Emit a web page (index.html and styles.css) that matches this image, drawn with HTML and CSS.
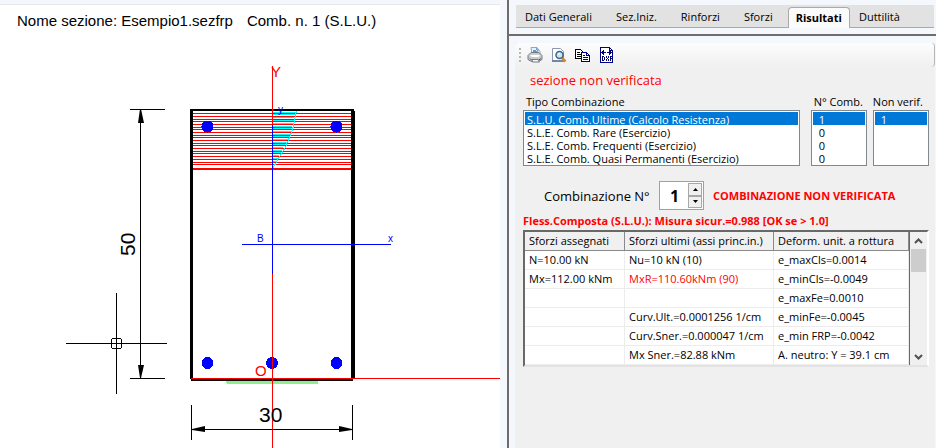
FILE: index.html
```
<!DOCTYPE html>
<html lang="it">
<head>
<meta charset="utf-8">
<title>Verifica sezione</title>
<link rel="stylesheet" href="styles.css">
</head>
<body>
<main class="app">
  <section class="view">
    <h1 class="view-title"><span>Nome sezione: Esempio1.sezfrp</span><span>Comb. n. 1 (S.L.U.)</span></h1>
    <svg class="drawing" viewBox="0 40 500 408" preserveAspectRatio="xMinYMin meet" role="img" aria-label="Sezione 30 x 50">
      <g shape-rendering="crispEdges">
        <path fill="#90ee90" d="M226 380h92v3l-1 1h-90l-1-1z"/>
        <path fill="#000" d="M190 109h164v2h1v268h-2v2H191v-2h-1zM193 111v268h158V111z" fill-rule="evenodd"/>
        <path stroke="#f00" d="M193 113.5h158M193 116.5h158M193 119.5h158M193 121.5h158M193 124.5h158M193 127.5h158M193 129.5h158M193 132.5h158M193 135.5h158M193 137.5h158M193 140.5h158M193 143.5h158M193 145.5h158M193 148.5h158M193 151.5h158M193 153.5h158M193 156.5h158M193 159.5h158M193 162.5h158M193 164.5h158"/>
        <path fill="#f00" d="M193 168h158v2H193z"/>
        <path stroke="#0ff" fill="none" d="M273 112.5h23M273 114.5h22M273 117.5h21M273 120.5h21M273 123.5h20M273 126.5h19M273 128.5h18M273 131.5h18M273 134.5h17M273 136.5h16M273 139.5h15M273 142.5h14M273 144.5h12M273 147.5h10M273 150.5h9M273 152.5h8M273 155.5h6M273 158.5h5M273 161.5h3M296.5 111L292.5 130L285.500 147L277.500 160L273 168"/>
      </g>
      <g fill="#00f" shape-rendering="crispEdges">
        <circle cx="207.5" cy="126.5" r="6"/><circle cx="336.5" cy="126.5" r="6"/>
        <circle cx="207.5" cy="363" r="6"/><circle cx="272" cy="363" r="6"/><circle cx="336.5" cy="363" r="6"/>
      </g>
      <g fill="none" shape-rendering="crispEdges">
        <path stroke="#f00" d="M272.5 66v382M191 378.5h309"/>
        <path stroke="#00f" d="M272.5 125v149M242 244.5h149"/>
        <path stroke="#000" d="M140.5 109v269M130 109.5h35M130 378.5h35M191.5 405v35M352.5 405v35M191 429.5h161M66 343.5h101M116.5 293v101"/>
        <path stroke="#000" d="M112.5 338.5h8l1 1v8l-1 1h-8l-1-1v-8z"/>
      </g>
      <path d="M140 109h1l3 14h-6zM138 365h6l-3 13h-1zM192 429l13-3v6l-13-2zM352 429l-13-3v6l13-2z"/>
      <g class="dim"><text x="259" y="422">30</text><text transform="translate(135 256) rotate(-90)">50</text></g>
      <g class="axis"><text x="271" y="77">Y</text><text x="255" y="376">O</text></g>
      <g class="local"><text x="257" y="242">B</text><text x="388" y="242">x</text><text x="278" y="113">y</text></g>
    </svg>
  </section>
  <aside class="side">
    <nav class="tabs-bar">
      <div class="tabs" role="tablist">
        <button type="button" role="tab">Dati Generali</button>
        <button type="button" role="tab">Sez.Iniz.</button>
        <button type="button" role="tab">Rinforzi</button>
        <button type="button" role="tab">Sforzi</button>
        <button type="button" role="tab" class="active" aria-selected="true">Risultati</button>
        <button type="button" role="tab">Duttilità</button>
      </div>
    </nav>
    <div class="panel">
      <div class="toolbar">
        <span class="grip"></span>
        <button type="button" aria-label="Stampa"><svg viewBox="0 0 16 16">
          <path fill="#e9f3fd" stroke="#8ba6c4" d="M5 6.500L4 .5h6l3 4v3z"/><path fill="#5b9ad8" d="M6 3h4l1 2H6zM9 .5v3.500h3z"/>
          <path fill="#c9cbcd" stroke="#75797e" d="M1 8.500l3-3h8l3 3v4l-3.500 2h-7L1 12.500z"/><path fill="#fff" d="M3 8h10l-1.500 2h-7z"/><path stroke="#55595e" d="M3 11.500l2 2h6l3-2"/><path fill="#f8f8f8" stroke="#75797e" d="M5 12.500h6l1.500 2.500h-7z"/></svg></button>
        <button type="button" aria-label="Anteprima"><svg viewBox="0 0 16 16">
          <path fill="#fff" stroke="#8698b4" d="M1.500 1.500h8l3 3v10h-11z"/><path fill="#6f86a8" d="M1 13h12v2H1z"/>
          <path stroke="#d98928" stroke-width="2.500" d="M11 11l3.500 3.500"/><circle cx="8.500" cy="8" r="3.500" fill="#c5e7f8" stroke="#46617f" stroke-width="1.500"/><path stroke="#fff" d="M7 7.500l2-1.500"/></svg></button>
        <button type="button" aria-label="Copia"><svg viewBox="0 0 16 16" shape-rendering="crispEdges">
          <path fill="#fff" stroke="#000" d="M.5 2.500h5l3 3v6h-8z"/><path stroke="#000" d="M2 5.500h3M2 7.500h5M2 9.500h5"/>
          <path fill="#fff" stroke="#000080" d="M6.500 5.500h5l3 3v6h-8zM11.500 5.500v3h3"/><path stroke="#000080" d="M8 8.500h2M8 10.500h5M8 12.500h5"/></svg></button>
        <button type="button" aria-label="Esporta DXF"><svg viewBox="0 0 16 16" shape-rendering="crispEdges">
          <path fill="#fff" stroke="#000080" d="M1.500 .5h9l3 3v12h-12z"/><path stroke="#000080" d="M10.500 .5v3h3M2 5.500h5M3.500 4v3M4.500 3v5M8 5.500h5M10.500 3v5M11.500 4v3"/>
          <path stroke="#000080" d="M3.500 9v5M3 9.500h2M3 13.500h2M5.500 10v3M7.500 9v2M9.500 9v2M8.500 11v1M7.500 12v2M9.500 12v2M11.500 9v5M11 9.500h2M11 11.500h2"/></svg></button>
      </div>
      <div class="content">
        <p class="status">sezione non verificata</p>
        <div class="lists">
          <div class="field wide"><label for="tipo">Tipo Combinazione</label>
            <select id="tipo" size="4"><option selected>S.L.U. Comb.Ultime (Calcolo Resistenza)</option><option>S.L.E. Comb. Rare (Esercizio)</option><option>S.L.E. Comb. Frequenti (Esercizio)</option><option>S.L.E. Comb. Quasi Permanenti (Esercizio)</option></select></div>
          <div class="field count"><label for="ncomb">N° Comb.</label>
            <select id="ncomb" size="4"><option selected>1</option><option>0</option><option>0</option><option>0</option></select></div>
          <div class="field count"><label for="nonver">Non verif.</label>
            <select id="nonver" size="4"><option selected>1</option></select></div>
        </div>
        <div class="picker">
          <label for="num">Combinazione N°</label>
          <div class="spinner"><input id="num" type="text" value="1">
            <div class="steps"><button type="button" aria-label="Aumenta"><svg viewBox="0 0 5 3"><path d="M0 3h5L2.500 0z"/></svg></button><button type="button" aria-label="Diminuisci"><svg viewBox="0 0 5 3"><path d="M0 0h5L2.500 3z"/></svg></button></div></div>
          <strong>COMBINAZIONE NON VERIFICATA</strong>
        </div>
        <p class="summary">Fless.Composta (S.L.U.): Misura sicur.=0.988 [OK se &gt; 1.0]</p>
        <div class="grid">
          <table>
            <thead><tr><th class="c1">Sforzi assegnati</th><th class="c2">Sforzi ultimi (assi princ.in.)</th><th>Deform. unit. a rottura</th></tr></thead>
            <tbody>
              <tr><td>N=10.00 kN</td><td>Nu=10 kN (10)</td><td>e_maxCls=0.0014</td></tr>
              <tr><td>Mx=112.00 kNm</td><td class="bad">MxR=110.60kNm (90)</td><td>e_minCls=-0.0049</td></tr>
              <tr><td></td><td></td><td>e_maxFe=0.0010</td></tr>
              <tr><td></td><td>Curv.Ult.=0.0001256 1/cm</td><td>e_minFe=-0.0045</td></tr>
              <tr><td></td><td>Curv.Sner.=0.000047 1/cm</td><td>e_min FRP=-0.0042</td></tr>
              <tr><td></td><td>Mx Sner.=82.88 kNm</td><td>A. neutro: Y = 39.1 cm</td></tr>
            </tbody>
          </table>
          <div class="scroll">
            <button type="button" aria-label="Su"><svg viewBox="0 0 9 6"><path d="M1 5l3.500-3.500L8 5"/></svg></button>
            <span class="thumb"></span>
            <button type="button" aria-label="Giù"><svg viewBox="0 0 9 6"><path d="M1 1l3.500 3.500L8 1"/></svg></button>
          </div>
        </div>
      </div>
    </div>
  </aside>
</main>
</body>
</html>
```
FILE: styles.css
```
* { box-sizing: border-box; }
body {
  margin: 0;
  background: #f4f7fc;
  color: #000;
  font: 12px/16px "Open Sans", "Noto Sans", sans-serif;
}
button, input, select { font: inherit; color: inherit; margin: 0; padding: 0; border: 0; background: none; }
p, h1 { margin: 0; }
svg { display: block; fill: none; }

.app { display: flex; min-height: 100vh; }

.view {
  flex: 500 1 500px;
  min-width: 0;
  margin: 4px 7px 0 0;
  border-top: 1px solid #e6e8ec;
  background: #fff;
}
.view-title {
  display: flex;
  gap: 14px;
  height: 35px;
  padding: 7px 17px;
  font: 15px/18px "Liberation Sans", sans-serif;
  white-space: nowrap;
}
.drawing { width: 100%; fill: #000; }
.drawing text { font-family: "Liberation Sans", sans-serif; }
.dim { font-size: 21px; }
.axis { font-size: 15px; fill: #f00; }
.local { font-size: 10px; fill: #00f; }

.side {
  flex: 429 1 429px;
  display: flex;
  flex-direction: column;
  min-width: 0;
  border-left: 2px solid #6d6d6d;
}
.tabs-bar { padding: 5px 2px 6px 7px; border-bottom: 2px solid #6d6d6d; }
.tabs {
  display: flex;
  align-items: flex-end;
  gap: 6px;
  height: 23px;
  border-bottom: 1px solid #a9a9a9;
  background: #e2e2e2;
}
.tabs button { height: 20px; padding: 0 9px; font-size: 11px; line-height: 18px; white-space: nowrap; }
.tabs .active {
  height: 21px;
  margin: 0 -6px -1px 0;
  padding: 0 7px;
  border: 1px solid #a9a9a9;
  border-bottom: 0;
  border-radius: 4px 4px 0 0;
  background: #fbfbfb;
  font-weight: 700;
}

.panel { flex: 1; margin: 7px 1px 0 6px; background: #f0f0f0; }
.toolbar {
  display: flex;
  align-items: center;
  gap: 8px;
  height: 24px;
  padding-left: 4px;
  border-right: 1px solid #b5b5b5;
  border-radius: 4px;
  background: linear-gradient(#fdfdfd, #f0f0f0);
}
.toolbar svg { width: 16px; height: 16px; }
.grip { width: 2px; height: 15px; margin-right: -2px; background: repeating-linear-gradient(#b5b5b5 0 2px, transparent 2px 4px); }

.content { padding: 4px 6px 0 8px; }
.status { padding-left: 7px; color: #f00; font-size: 13px; line-height: 18px; }
.lists { display: flex; padding-top: 4px; }
.field { display: flex; flex-direction: column; }
.field label { padding-left: 3px; line-height: 17px; font-size: 11px; white-space: nowrap; }
.wide { flex: 276; margin-right: 11px; }
.count { flex: 56; min-width: 0; }
.count + .count { margin-left: 6px; }
.count + .count label { padding-left: 0; }
.field select {
  height: 56px;
  padding: 1px;
  overflow: hidden;
  border: 1px solid #828790;
  border-radius: 0;
  background: #fff;
  font-size: 11px;
  outline: 0;
}
.field option { min-height: 13px; height: 13px; padding: 0 2px; line-height: 13px; }
.count option { padding-left: 6px; }
.field option:checked { background: linear-gradient(#0078d7, #0078d7); -webkit-text-fill-color: #fff; }

.picker { display: flex; align-items: center; padding: 15px 0 0 21px; }
.picker label { width: 115px; font-size: 13px; white-space: nowrap; }
.spinner { display: flex; width: 45px; height: 29px; padding: 1px; border: 1px solid #a0a0a0; background: #fff; }
.spinner input { flex: 1; min-width: 0; padding-left: 9px; font-size: 16px; font-weight: 700; }
.steps { display: flex; flex-direction: column; width: 14px; }
.steps button { flex: 1; display: grid; place-items: center; border: 1px solid #a8a8a8; background: #f0f0f0; }
.steps svg { width: 5px; height: 3px; fill: #000; }
.picker strong { margin-left: 9px; color: #f00; font-size: 11px; white-space: nowrap; }
.summary { padding: 3px 0 1px; color: #f00; font-size: 11px; font-weight: 700; white-space: nowrap; }

.grid { display: flex; border: 2px solid; border-color: #696969 #fff #e3e3e3 #696969; background: #fff; }
table { flex: 1; border-collapse: separate; border-spacing: 0; table-layout: fixed; border-right: 1px solid #696969; }
.c1 { width: 100px; }
.c2 { width: 149px; }
th, td {
  height: 19px;
  padding: 0 0 0 4px;
  border-right: 1px solid #ececec;
  border-bottom: 1px solid #ececec;
  font-size: 11px;
  line-height: 18px;
  font-weight: 400;
  text-align: left;
  white-space: nowrap;
}
th { border-color: #8a8a8a; background: #f0f0f0; }
.bad { color: #f00; }
.scroll { display: flex; flex-direction: column; width: 17px; background: #f0f0f0; }
.scroll button { display: grid; place-items: center; height: 17px; }
.scroll svg { width: 9px; height: 6px; stroke: #505050; stroke-width: 2; }
.thumb { height: 23px; margin: 0 1px auto; background: #cdcdcd; }
```
